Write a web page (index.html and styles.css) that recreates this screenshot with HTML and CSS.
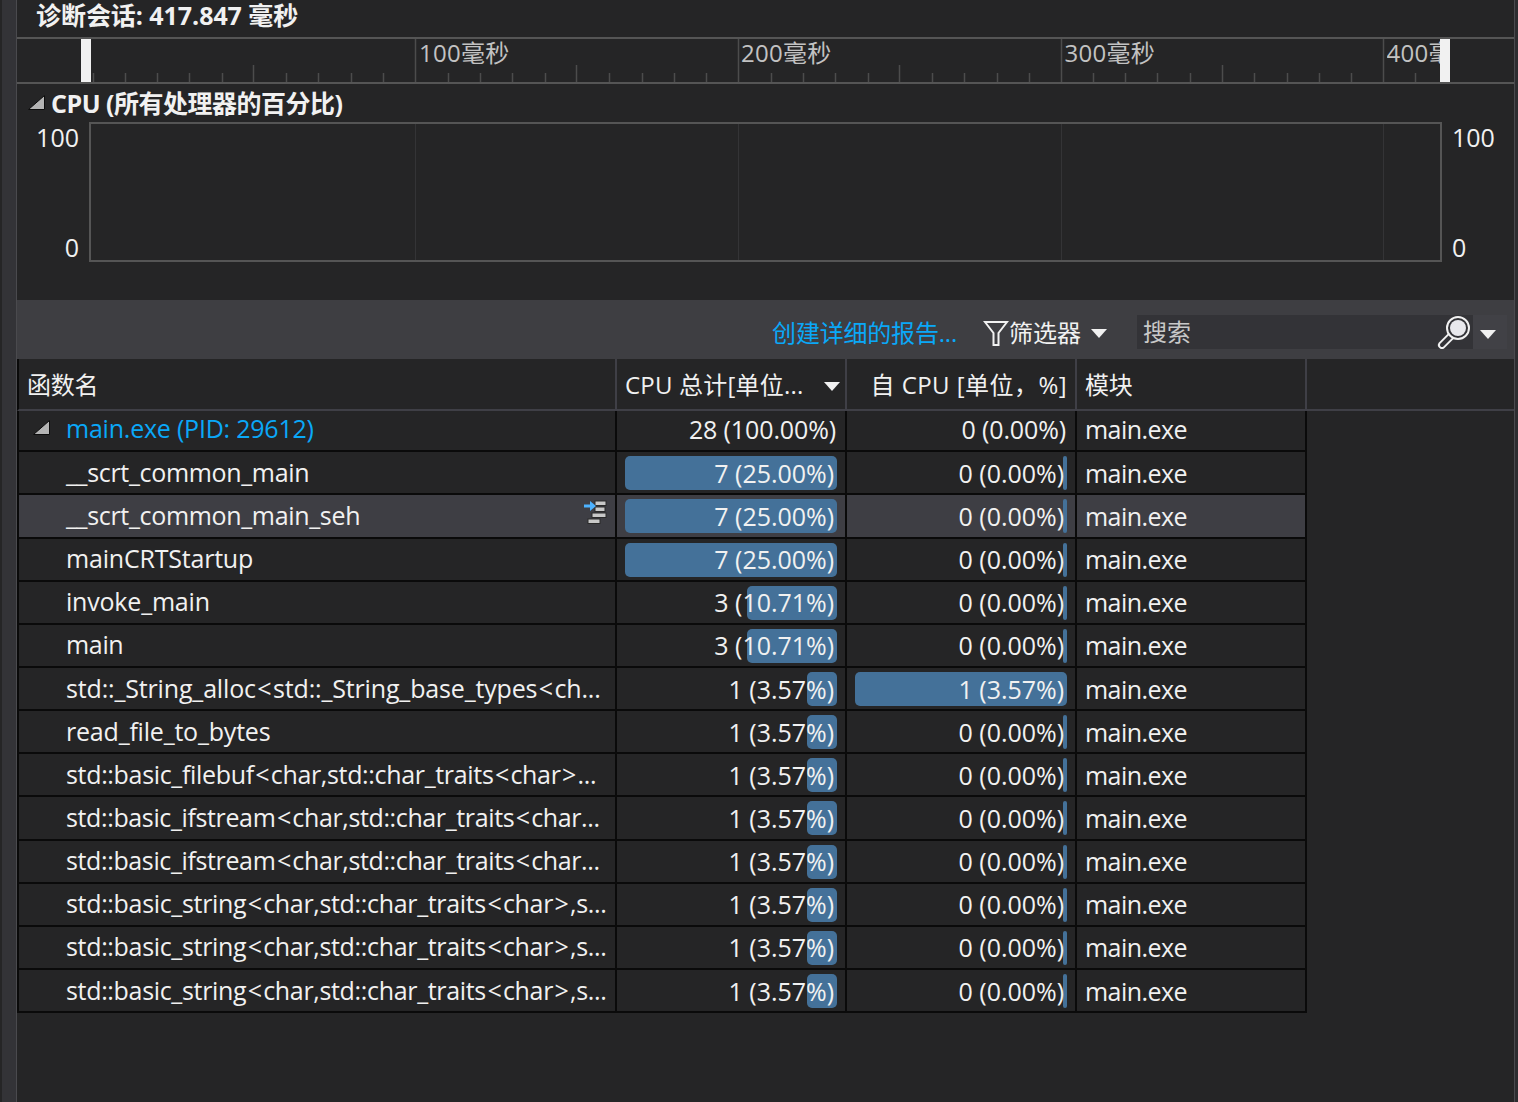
FILE: index.html
```html
<!DOCTYPE html>
<html lang="zh">
<head>
<meta charset="utf-8">
<title>诊断会话</title>
<link rel="stylesheet" href="styles.css">
</head>
<body>
<div class="app">
  <div class="rail"></div>
  <main class="main">
    <div class="title">诊断会话: 417.847 毫秒</div>
    <div class="ruler">
      <svg class="ticks" width="1497" height="43" viewBox="17 39 1497 43">
        <path class="tick" d="M93.500 73V82M125.500 73V82M157.500 73V82M189.500 73V82M222.500 73V82M286.500 73V82M318.500 73V82M351.500 73V82M383.500 73V82M448.500 73V82M480.500 73V82M512.500 73V82M545.500 73V82M609.500 73V82M642.500 73V82M674.500 73V82M706.500 73V82M771.500 73V82M803.500 73V82M835.500 73V82M868.500 73V82M932.500 73V82M964.500 73V82M997.500 73V82M1029.500 73V82M1093.500 73V82M1125.500 73V82M1157.500 73V82M1190.500 73V82M1254.500 73V82M1287.500 73V82M1319.500 73V82M1351.500 73V82M1415.500 73V82"/>
        <path class="tick" d="M253.500 65V82M576.500 65V82M899.500 65V82M1222.500 65V82"/>
        <path class="tick" d="M415.500 39V82M738.500 39V82M1061.500 39V82M1383.500 39V82"/>
      </svg>
      <span class="ruler-label label-100">100毫秒</span>
      <span class="ruler-label label-200">200毫秒</span>
      <span class="ruler-label label-300">300毫秒</span>
      <span class="ruler-label label-400">400毫秒</span>
      <span class="handle handle-start"></span>
      <span class="handle handle-end"></span>
    </div>
    <section class="cpu">
      <h2 class="cpu-title">
        <svg class="expander" width="18" height="16" viewBox="0 0 18 16"><polygon points="16.500,0.500 16.500,14.500 0.500,14.500" /></svg>
        <span>CPU (所有处理器的百分比)</span>
      </h2>
      <div class="chart-row">
        <div class="axis axis-left"><span>100</span><span>0</span></div>
        <div class="chart"><i class="grid-a"></i><i class="grid-b"></i><i class="grid-b"></i><i class="grid-c"></i></div>
        <div class="axis axis-right"><span>100</span><span>0</span></div>
      </div>
    </section>
    <div class="toolbar">
      <a class="report-link">创建详细的报告...</a>
      <div class="filter">
        <svg class="funnel" width="26" height="28" viewBox="0 0 26 28"><path d="M2 3H24L15.500 14V26H10.500V14Z"/></svg>
        <span>筛选器</span>
        <svg class="caret" width="16" height="9" viewBox="0 0 16 9"><polygon points="0,0 16,0 8,9"/></svg>
      </div>
      <div class="search-wrap">
        <div class="search">
          <span class="search-text">搜索</span>
          <svg class="magnifier" width="34" height="34" viewBox="0 0 34 34">
            <path class="mag-handle" d="M15 20L5 30"/>
            <path class="mag-handle-in" d="M15 20L5 30"/>
            <circle class="mag-ring" cx="21" cy="13" r="11"/>
            <circle class="mag-glass" cx="21" cy="13" r="8"/>
          </svg>
        </div>
        <svg class="caret caret-search" width="16" height="9" viewBox="0 0 16 9"><polygon points="0,0 16,0 8,9"/></svg>
      </div>
    </div>
    <div class="table">
      <div class="row head">
        <div class="cell">函数名</div>
        <div class="cell sort-cell">CPU 总计[单位...<svg class="caret" width="16" height="9" viewBox="0 0 16 9"><polygon points="0,0 16,0 8,9"/></svg></div>
        <div class="cell end">自 CPU [单位，%]</div>
        <div class="cell">模块</div>
      </div>
      <div class="row first">
        <div class="cell name root">
          <svg class="expander" width="18" height="16" viewBox="0 0 18 16"><polygon points="16.500,0.500 16.500,14.500 0.500,14.500" /></svg>
          <span>main.exe (PID: 29612)</span>
        </div>
        <div class="cell num">28 (100.00%)</div>
        <div class="cell num">0 (0.00%)</div>
        <div class="cell mod">main.exe</div>
      </div>
      <div class="row">
        <div class="cell name">__scrt_common_main</div>
        <div class="cell num"><i class="bar full"></i><span>7 (25.00%)</span></div>
        <div class="cell num"><i class="bar sliver"></i><span>0 (0.00%)</span></div>
        <div class="cell mod">main.exe</div>
      </div>
      <div class="row selected">
        <div class="cell name">__scrt_common_main_seh
          <svg class="hot" width="24" height="24" viewBox="0 0 24 24">
            <rect x="11" y="1" width="11" height="4.500"/>
            <rect x="11" y="7" width="10" height="4.500"/>
            <rect x="8" y="13" width="14" height="4.500"/>
            <rect x="4" y="19" width="12" height="4.500"/>
            <path class="hot-arrow" d="M0 6H8"/>
            <polygon class="hot-head" points="6,1 12,6 6,11"/>
          </svg>
        </div>
        <div class="cell num"><i class="bar full"></i><span>7 (25.00%)</span></div>
        <div class="cell num"><i class="bar sliver"></i><span>0 (0.00%)</span></div>
        <div class="cell mod">main.exe</div>
      </div>
      <div class="row">
        <div class="cell name loose">mainCRTStartup</div>
        <div class="cell num"><i class="bar full"></i><span>7 (25.00%)</span></div>
        <div class="cell num"><i class="bar sliver"></i><span>0 (0.00%)</span></div>
        <div class="cell mod">main.exe</div>
      </div>
      <div class="row">
        <div class="cell name loose">invoke_main</div>
        <div class="cell num"><i class="bar mid"></i><span>3 (10.71%)</span></div>
        <div class="cell num"><i class="bar sliver"></i><span>0 (0.00%)</span></div>
        <div class="cell mod">main.exe</div>
      </div>
      <div class="row">
        <div class="cell name">main</div>
        <div class="cell num"><i class="bar mid"></i><span>3 (10.71%)</span></div>
        <div class="cell num"><i class="bar sliver"></i><span>0 (0.00%)</span></div>
        <div class="cell mod">main.exe</div>
      </div>
      <div class="row">
        <div class="cell name wide"><span>std::_String_alloc<b>&lt;</b>std::_String_base_types<b>&lt;</b>ch...</span></div>
        <div class="cell num"><i class="bar small"></i><span>1 (3.57%)</span></div>
        <div class="cell num"><i class="bar full"></i><span>1 (3.57%)</span></div>
        <div class="cell mod">main.exe</div>
      </div>
      <div class="row">
        <div class="cell name loose">read_file_to_bytes</div>
        <div class="cell num"><i class="bar small"></i><span>1 (3.57%)</span></div>
        <div class="cell num"><i class="bar sliver"></i><span>0 (0.00%)</span></div>
        <div class="cell mod">main.exe</div>
      </div>
      <div class="row">
        <div class="cell name"><span>std::basic_filebuf<b>&lt;</b>char,std::char_traits<b>&lt;</b>char<b>&gt;</b>...</span></div>
        <div class="cell num"><i class="bar small"></i><span>1 (3.57%)</span></div>
        <div class="cell num"><i class="bar sliver"></i><span>0 (0.00%)</span></div>
        <div class="cell mod">main.exe</div>
      </div>
      <div class="row">
        <div class="cell name narrow"><span>std::basic_ifstream<b>&lt;</b>char,std::char_traits<b>&lt;</b>char...</span></div>
        <div class="cell num"><i class="bar small"></i><span>1 (3.57%)</span></div>
        <div class="cell num"><i class="bar sliver"></i><span>0 (0.00%)</span></div>
        <div class="cell mod">main.exe</div>
      </div>
      <div class="row">
        <div class="cell name narrow"><span>std::basic_ifstream<b>&lt;</b>char,std::char_traits<b>&lt;</b>char...</span></div>
        <div class="cell num"><i class="bar small"></i><span>1 (3.57%)</span></div>
        <div class="cell num"><i class="bar sliver"></i><span>0 (0.00%)</span></div>
        <div class="cell mod">main.exe</div>
      </div>
      <div class="row">
        <div class="cell name"><span>std::basic_string<b>&lt;</b>char,std::char_traits<b>&lt;</b>char<b>&gt;</b>,s...</span></div>
        <div class="cell num"><i class="bar small"></i><span>1 (3.57%)</span></div>
        <div class="cell num"><i class="bar sliver"></i><span>0 (0.00%)</span></div>
        <div class="cell mod">main.exe</div>
      </div>
      <div class="row">
        <div class="cell name"><span>std::basic_string<b>&lt;</b>char,std::char_traits<b>&lt;</b>char<b>&gt;</b>,s...</span></div>
        <div class="cell num"><i class="bar small"></i><span>1 (3.57%)</span></div>
        <div class="cell num"><i class="bar sliver"></i><span>0 (0.00%)</span></div>
        <div class="cell mod">main.exe</div>
      </div>
      <div class="row">
        <div class="cell name"><span>std::basic_string<b>&lt;</b>char,std::char_traits<b>&lt;</b>char<b>&gt;</b>,s...</span></div>
        <div class="cell num"><i class="bar small"></i><span>1 (3.57%)</span></div>
        <div class="cell num"><i class="bar sliver"></i><span>0 (0.00%)</span></div>
        <div class="cell mod">main.exe</div>
      </div>
    </div>
  </main>
  <div class="rail rail-right"></div>
</div>
</body>
</html>
```

FILE: styles.css
```css
* { box-sizing: border-box; }
html, body { margin: 0; padding: 0; background: #252526; }
body {
  font-family: "Open Sans", "Noto Sans CJK SC", sans-serif;
  color: #f1f1f1;
  overflow: hidden;
}
.app { display: flex; width: 1518px; height: 1102px; overflow: hidden; }
.rail { width: 17px; flex: none; background: #333337; border-left: 2px solid #252526; border-right: 1px solid #4a4a4e; }
.rail-right { width: 4px; border-left: 1px solid #4a4a4e; border-right: 0; background: #2d2d30; }
.main { flex: 1; min-width: 0; display: flex; flex-direction: column; }

.title {
  height: 38px;
  flex: none;
  padding-left: 19px;
  font-size: 25px;
  font-weight: 700;
  line-height: 30px;
  letter-spacing: -0.05px;
  white-space: nowrap;
}

.ruler {
  position: relative;
  height: 47px;
  flex: none;
  border-top: 2px solid #555555;
  border-bottom: 2px solid #555555;
  margin-top: -1px;
  overflow: hidden;
}
.ticks { position: absolute; left: 0; top: 0; display: block; }
.tick { stroke: #4c4c4c; stroke-width: 1.500; fill: none; }
.ruler-label {
  position: absolute;
  top: -2px;
  font-size: 24px;
  line-height: 32px;
  color: #c2c2c2;
  white-space: nowrap;
  letter-spacing: 0.3px;
}
.label-100 { left: 402px; }
.label-200 { left: 724px; }
.label-300 { left: 1047.500px; }
.label-400 { left: 1369.500px; width: 60px; overflow: hidden; }
.handle { position: absolute; top: 0; bottom: 0; width: 10px; background: #f1f1f1; }
.handle-start { left: 64px; }
.handle-end { left: 1423px; }

.cpu { height: 216px; flex: none; padding-top: 2px; }
.cpu-title {
  margin: 0;
  height: 34px;
  display: flex;
  align-items: center;
  gap: 5px;
  padding-left: 11px;
  font-size: 25px;
  font-weight: 700;
  line-height: 32px;
  letter-spacing: -0.5px;
}
.expander { flex: none; display: block; }
.expander polygon { fill: #b4b4b4; stroke: #0c0c0c; stroke-width: 1; }
.chart-row { display: flex; height: 140px; margin-top: 2px; }
.axis {
  display: flex;
  flex-direction: column;
  justify-content: space-between;
  font-size: 25px;
  line-height: 30px;
  flex: none;
}
.axis-left { width: 72px; padding-right: 10px; align-items: flex-end; }
.axis-right { width: 72px; padding-left: 10px; align-items: flex-start; }
.chart {
  width: 1353px;
  flex: none;
  display: flex;
  border: 2px solid #555555;
}
.chart i { display: block; flex: none; border-right: 1px solid #343436; }
.grid-a { width: 325px; }
.grid-b { width: 323px; }
.grid-c { width: 322px; }

.toolbar {
  height: 59px;
  flex: none;
  background: #3e3e42;
  display: flex;
  align-items: center;
  justify-content: flex-end;
  padding: 7px 7px 0 0;
}
.report-link { color: #0aa8f8; font-size: 24px; line-height: 32px; letter-spacing: -0.2px; margin-right: 26px; white-space: nowrap; }
.filter { display: flex; align-items: center; font-size: 24px; line-height: 32px; margin-right: 30px; white-space: nowrap; }
.funnel { display: block; }
.funnel path { fill: none; stroke: #f1f1f1; stroke-width: 2; }
.caret { display: block; flex: none; }
.caret polygon { fill: #f1f1f1; }
.filter .caret { margin-left: 10px; }
.search-wrap { display: flex; align-items: center; width: 370px; height: 34px; background: #414146; margin-top: -2px; }
.search {
  width: 336px;
  height: 34px;
  background: #333337;
  display: flex;
  align-items: center;
  justify-content: space-between;
  padding-left: 6px;
  font-size: 24px;
  color: #c8c8c8;
}
.search-text { display: block; line-height: 32px; padding-bottom: 1px; }
.magnifier { display: block; margin-right: 2px; }
.mag-handle { stroke: #f1f1f1; stroke-width: 8; stroke-linecap: round; fill: none; }
.mag-handle-in { stroke: #333337; stroke-width: 4; stroke-linecap: round; fill: none; }
.mag-ring { fill: #333337; stroke: #f1f1f1; stroke-width: 2; }
.mag-glass { fill: #e8e8ec; }
.caret-search { margin-left: 7px; margin-top: 4px; }

.table { display: flex; flex-direction: column; }
.row {
  display: grid;
  grid-template-columns: 598px 230px 230px 230px;
  width: 1290px;
  height: 43.170px;
  border-bottom: 2px solid #0a0a0a;
  border-left: 2px solid #0a0a0a;
  font-size: 25px;
  white-space: nowrap;
}
.row.head {
  width: auto;
  height: 52px;
  border-bottom: 2px solid #3f3f46;
  align-items: stretch;
}
.row.first { height: 41.200px; }
.cell {
  position: relative;
  display: flex;
  align-items: center;
  border-right: 2px solid #0a0a0a;
  min-width: 0;
  overflow: hidden;
}
.row.first .cell { padding-bottom: 4px; }
.head .cell {
  padding-left: 8px;
  padding-bottom: 2px;
  border-right-color: #3f3f46;
  font-size: 24px;
  letter-spacing: -0.3px;
}
.head .sort-cell { justify-content: space-between; padding-right: 5px; letter-spacing: 0.2px; }
.head .sort-cell .caret { margin-top: 6px; }
.head .end { justify-content: flex-end; padding-right: 8px; letter-spacing: 0.45px; }
.name { padding-left: 47px; padding-bottom: 2px; letter-spacing: -0.33px; }
.name.loose { letter-spacing: -0.2px; }
.name.wide { letter-spacing: -0.16px; }
.name.narrow { letter-spacing: -0.37px; }
.name b { font-weight: 400; margin: 0 1.500px; }
.row.first .name.root { padding: 0 0 6px 14px; color: #0aa8f8; gap: 15px; letter-spacing: -0.22px; }
.num { justify-content: flex-end; padding-right: 10px; letter-spacing: -0.12px; }
.row.first .num { padding-right: 9px; }
.num span { position: relative; padding-right: 1px; letter-spacing: -0.03px; }
.mod { padding-left: 8px; letter-spacing: -0.55px; }
.selected .cell { background: #3e3e44; }
.bar {
  position: absolute;
  right: 8px;
  top: 4px;
  height: 34px;
  background: #447199;
  border-radius: 5px;
}
.bar.full { width: 212px; }
.bar.mid { width: 90px; }
.bar.small { width: 30px; }
.bar.sliver { width: 4px; border-radius: 2px; }
.hot { position: absolute; right: 7px; top: 5px; }
.hot rect { fill: #c8c8c8; stroke: #2a2a2a; stroke-width: 1; }
.hot-arrow { stroke: #4db2ff; stroke-width: 3; fill: none; }
.hot-head { fill: #4db2ff; }
```
